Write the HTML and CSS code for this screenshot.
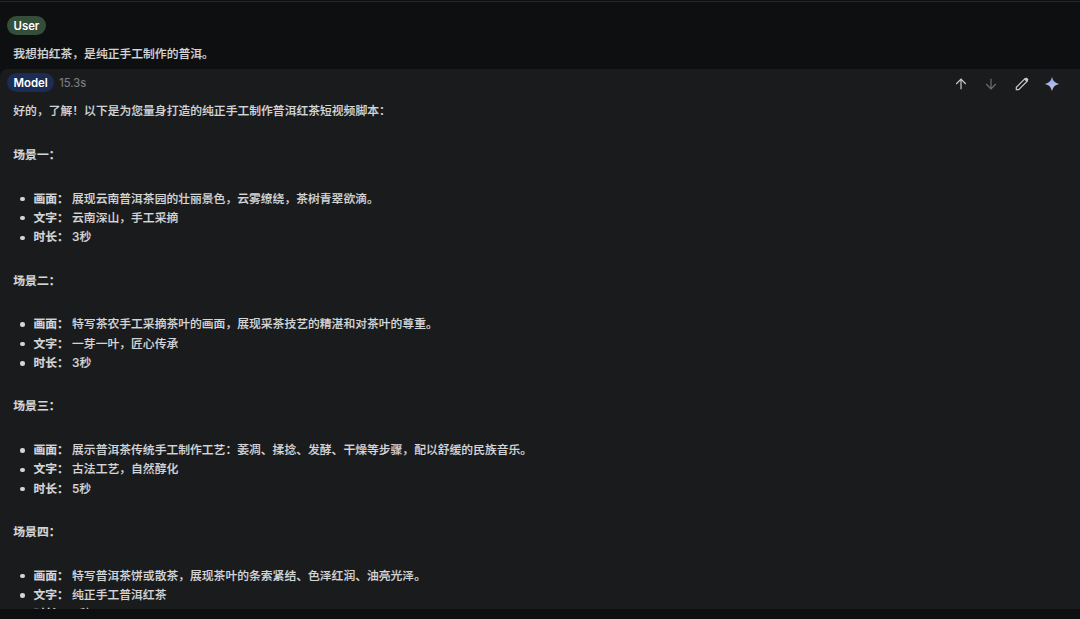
FILE: index.html
```html
<!DOCTYPE html>
<html lang="zh-CN">
<head>
<meta charset="utf-8">
<title>Chat</title>
<link rel="stylesheet" href="styles.css">
</head>
<body>
<main class="chat">
  <section class="turn user-turn">
    <header class="turn-head"><span class="badge badge-user">User</span></header>
    <p class="text">我想拍红茶，是纯正手工制作的普洱。</p>
  </section>
  <section class="turn model-turn">
    <header class="turn-head">
      <span class="badge badge-model">Model</span>
      <span class="time">15.3s</span>
      <div class="actions">
        <svg class="icon" viewBox="0 0 16 16"><path d="M8 13.3V3.2M3.2 8 8 3.2 12.8 8"/></svg>
        <svg class="icon dim" viewBox="0 0 16 16"><path d="M8 2.7v10.1M3.2 8 8 12.8 12.8 8"/></svg>
        <svg class="icon" viewBox="0 0 16 16"><path d="M2.3 13.7v-2.4L11 2.6l2.4 2.4L4.7 13.7z"/><path class="solid" d="M10.2 3.4 11.7 1.9q.7-.6 1.4 0l1 1q.6.7 0 1.4L12.6 5.8z"/></svg>
        <svg class="icon spark" viewBox="0 0 16 16"><defs><linearGradient id="spark" x1="0" y1="0" x2="0.3" y2="1"><stop offset="0" stop-color="#7f9cf0"/><stop offset=".6" stop-color="#a9b9ef"/><stop offset="1" stop-color="#d3b9cf"/></linearGradient></defs><path fill="url(#spark)" d="M8 .8C9 5.1 10.9 7 15.2 8 10.9 9 9 10.9 8 15.2 7 10.9 5.1 9 .8 8 5.1 7 7 5.1 8 .8z"/></svg>
      </div>
    </header>
    <p class="text">好的，了解！以下是为您量身打造的纯正手工制作普洱红茶短视频脚本：</p>
    <h2 class="scene">场景一：</h2>
    <ul class="details">
      <li><b>画面：</b> 展现云南普洱茶园的壮丽景色，云雾缭绕，茶树青翠欲滴。</li>
      <li><b>文字：</b> 云南深山，手工采摘</li>
      <li><b>时长：</b> 3秒</li>
    </ul>
    <h2 class="scene">场景二：</h2>
    <ul class="details">
      <li><b>画面：</b> 特写茶农手工采摘茶叶的画面，展现采茶技艺的精湛和对茶叶的尊重。</li>
      <li><b>文字：</b> 一芽一叶，匠心传承</li>
      <li><b>时长：</b> 3秒</li>
    </ul>
    <h2 class="scene">场景三：</h2>
    <ul class="details">
      <li><b>画面：</b> 展示普洱茶传统手工制作工艺：萎凋、揉捻、发酵、干燥等步骤，配以舒缓的民族音乐。</li>
      <li><b>文字：</b> 古法工艺，自然醇化</li>
      <li><b>时长：</b> 5秒</li>
    </ul>
    <h2 class="scene">场景四：</h2>
    <ul class="details">
      <li><b>画面：</b> 特写普洱茶饼或散茶，展现茶叶的条索紧结、色泽红润、油亮光泽。</li>
      <li><b>文字：</b> 纯正手工普洱红茶</li>
      <li><b>时长：</b> 3秒</li>
    </ul>
  </section>
</main>
</body>
</html>
```

FILE: styles.css
```css
* { box-sizing: border-box; }

body {
  margin: 0;
  background: #0e0f11;
  color: #d4d5d6;
  font: 500 11.81px/19.4px Inter, "Noto Sans CJK SC", sans-serif;
  -webkit-text-stroke: 0.15px;
}

.chat {
  height: 619px;
  padding: 1px 0 10px;
  display: flex;
  flex-direction: column;
  overflow: hidden;
}

.user-turn {
  flex: none;
  height: 68px;
  padding-top: 14px;
  border-top: 1px solid #25272a;
}

.model-turn {
  flex: 1;
  min-height: 0;
  padding-top: 4px;
  overflow: hidden;
  background: #1a1b1d;
  border-top-left-radius: 8px;
}

.turn-head {
  display: flex;
  align-items: center;
  height: 19px;
  padding: 0 20px 0 7px;
}

.badge {
  height: 19px;
  padding: 1px 6.5px 0;
  border-radius: 10px;
  color: #fff;
  font-weight: 600;
  font-size: 11.4px;
  line-height: 19px;
  -webkit-text-stroke: 0;
}

.badge-user { background: #344e39; }
.badge-model { background: #1c2c52; }

.time {
  margin-left: 5px;
  padding-top: 2px;
  color: #7c7e82;
  font-weight: 400;
  font-size: 11.2px;
}

.actions {
  display: flex;
  gap: 14.3px;
  margin-left: auto;
  padding-top: 2px;
}

.icon {
  width: 16px;
  height: 16px;
  fill: none;
  stroke: #c9cacc;
  stroke-width: 1.2;
}

.dim { stroke: #6d6f72; }
.spark { stroke: none; }
.solid { fill: #c9cacc; stroke: none; }

.text {
  margin: 10px 13.3px 0;
  padding-bottom: 0.6px;
}

.scene {
  margin: 24px 13.3px 0;
  font-size: inherit;
  font-weight: 700;
}

.details {
  margin: 24.1px 0 0;
  padding: 0 0 0 33.5px;
}

.details li {
  position: relative;
  list-style: none;
}

.details li::before {
  content: "";
  position: absolute;
  left: -13.3px;
  top: 7.2px;
  width: 4.4px;
  height: 4.4px;
  border-radius: 50%;
  background: #d4d5d6;
}
```
